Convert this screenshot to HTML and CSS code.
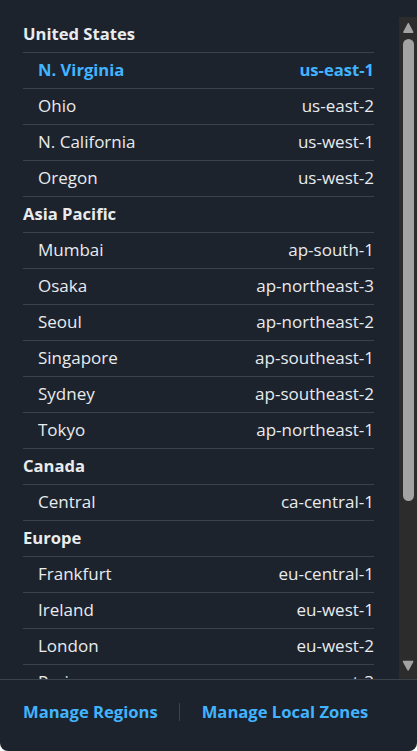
FILE: index.html
```html
<!DOCTYPE html>
<html lang="en">
<head>
<meta charset="utf-8">
<title>Regions</title>
<link rel="stylesheet" href="styles.css">
</head>
<body>
<div class="panel">
  <div class="main">
    <div class="list">
      <div class="group">United States</div>
      <div class="row active"><span>N. Virginia</span><span>us-east-1</span></div>
      <div class="row"><span>Ohio</span><span>us-east-2</span></div>
      <div class="row"><span>N. California</span><span>us-west-1</span></div>
      <div class="row"><span>Oregon</span><span>us-west-2</span></div>
      <div class="group">Asia Pacific</div>
      <div class="row"><span>Mumbai</span><span>ap-south-1</span></div>
      <div class="row"><span>Osaka</span><span>ap-northeast-3</span></div>
      <div class="row"><span>Seoul</span><span>ap-northeast-2</span></div>
      <div class="row"><span>Singapore</span><span>ap-southeast-1</span></div>
      <div class="row"><span>Sydney</span><span>ap-southeast-2</span></div>
      <div class="row"><span>Tokyo</span><span>ap-northeast-1</span></div>
      <div class="group">Canada</div>
      <div class="row"><span>Central</span><span>ca-central-1</span></div>
      <div class="group">Europe</div>
      <div class="row"><span>Frankfurt</span><span>eu-central-1</span></div>
      <div class="row"><span>Ireland</span><span>eu-west-1</span></div>
      <div class="row"><span>London</span><span>eu-west-2</span></div>
      <div class="row"><span>Paris</span><span>eu-west-3</span></div>
      <div class="row"><span>Stockholm</span><span>eu-north-1</span></div>
      <div class="group">South America</div>
      <div class="row"><span>São Paulo</span><span>sa-east-1</span></div>
    </div>
    <div class="scrollbar" aria-hidden="true">
      <svg class="arrow up" width="18" height="17" viewBox="0 0 18 17"><path d="M5 15.2 L9.3 6.8 L13.6 15.2 Z" fill="#a3a3a3" stroke="#a3a3a3" stroke-width="1.6" stroke-linejoin="round"/></svg>
      <div class="thumb"></div>
      <svg class="arrow down" width="18" height="17" viewBox="0 0 18 17"><path d="M4.6 2.5 L13.6 2.5 L9.1 10.8 Z" fill="#a3a3a3" stroke="#a3a3a3" stroke-width="1.6" stroke-linejoin="round"/></svg>
    </div>
  </div>
  <div class="footer">
    <a class="link" href="#">Manage Regions</a>
    <span class="sep"></span>
    <a class="link" href="#">Manage Local Zones</a>
  </div>
</div>
</body>
</html>
```

FILE: styles.css
```css
html, body {
  margin: 0;
  padding: 0;
  background: #ffffff;
}
body {
  font-family: "Open Sans", "Noto Sans", sans-serif;
  font-size: 17px;
  color: #e9ebed;
}
.panel {
  width: 417px;
  height: 751px;
  background: #1c232d;
  border-radius: 0 0 8px 8px;
  display: flex;
  flex-direction: column;
  padding-top: 17px;
  box-sizing: border-box;
  overflow: hidden;
}
.main {
  height: 662px;
  flex: none;
  display: flex;
}
.list {
  flex: 1;
  overflow: hidden;
  padding: 0 25px 0 23px;
}
.group, .row {
  height: 36px;
  box-sizing: border-box;
  border-bottom: 1px solid #3b424b;
  display: flex;
  align-items: center;
  white-space: nowrap;
  padding-bottom: 3px;
}
.group {
  font-weight: 700;
  font-size: 16.6px;
}
.row {
  justify-content: space-between;
  padding-left: 15px;
}
.row.active {
  color: #42b4ff;
  font-weight: 700;
  font-size: 16.6px;
}
.scrollbar {
  width: 18px;
  flex: none;
  background: #2c2c2c;
  display: flex;
  flex-direction: column;
}
.arrow {
  display: block;
  flex: none;
}
.thumb {
  width: 11px;
  height: 462px;
  margin: 5px 3px 0 4px;
  background: #a3a3a3;
  border-radius: 6px;
}
.arrow.down {
  margin-top: auto;
  margin-bottom: 3px;
}
.footer {
  flex: 1;
  border-top: 1px solid #3b424b;
  display: flex;
  align-items: center;
  padding: 0 23px 8px;
}
.link {
  color: #42b4ff;
  font-weight: 700;
  font-size: 16.6px;
  text-decoration: none;
  white-space: nowrap;
}
.sep {
  width: 1px;
  height: 18px;
  background: #3b424b;
  margin: 0 22px 0 21px;
}
```
